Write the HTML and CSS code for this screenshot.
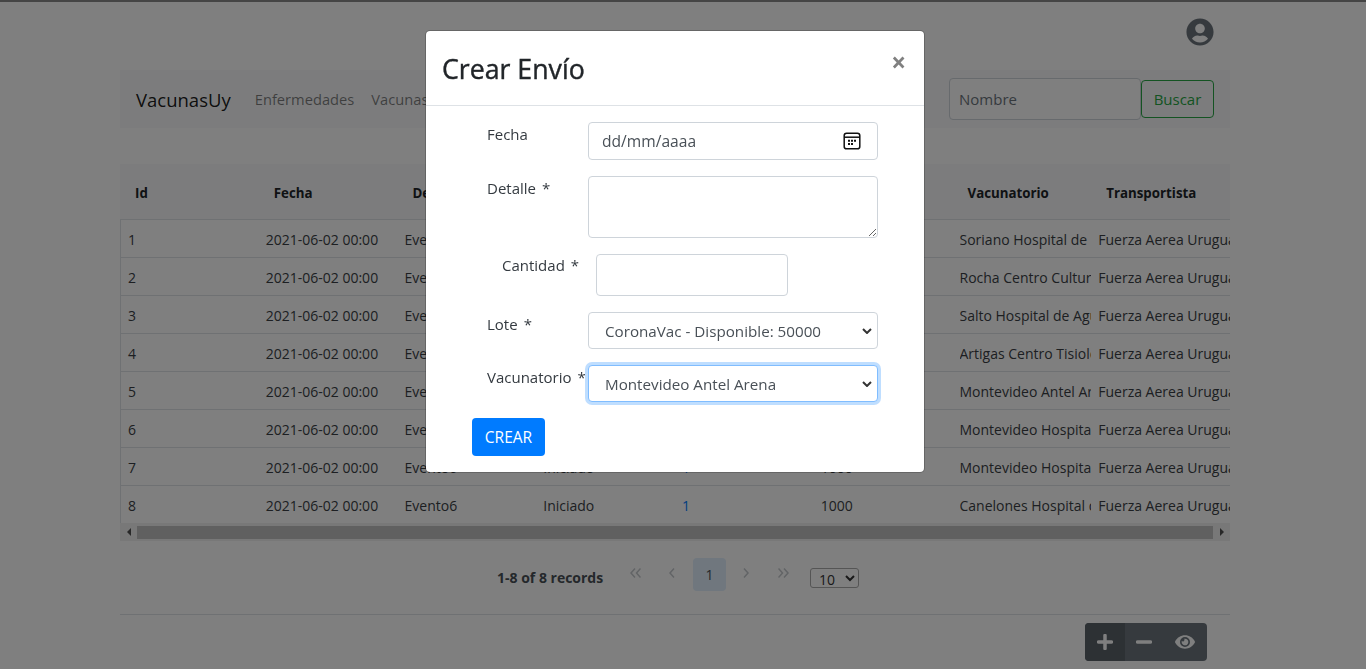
FILE: index.html
```html
<!DOCTYPE html>
<html lang="es">
<head>
    <meta charset="UTF-8">
    <meta name="viewport" content="width=device-width, initial-scale=1.0">
    <title>VacunasUy</title>
    <link rel="stylesheet" href="styles.css">
</head>
<body>
    <div class="top-line"></div>
    <div class="page">
        <div class="account">
            <svg class="account-icon" viewBox="0 0 496 512"><path d="M248 8C111 8 0 119 0 256s111 248 248 248 248-111 248-248S385 8 248 8zm0 96c48.6 0 88 39.4 88 88s-39.4 88-88 88-88-39.4-88-88 39.4-88 88-88zm0 344c-58.7 0-111.3-26.6-146.5-68.2 18.8-35.4 55.6-59.8 98.5-59.8 2.4 0 4.8.4 7.1 1.1 13 4.2 26.6 6.9 40.9 6.9 14.3 0 28-2.7 40.9-6.9 2.3-.7 4.7-1.1 7.1-1.1 42.9 0 79.7 24.4 98.5 59.8C359.3 421.4 306.7 448 248 448z"/></svg>
        </div>

        <nav class="navbar">
            <a class="brand" href="#">VacunasUy</a>
            <a class="nav-link" href="#">Enfermedades</a>
            <a class="nav-link" href="#">Vacunas</a>
            <form class="nav-search">
                <input class="nav-input" type="text" placeholder="Nombre">
                <button class="nav-button" type="button">Buscar</button>
            </form>
        </nav>

        <div class="table-box">
            <table class="data-table">
                <thead>
                    <tr><th>Id</th><th>Fecha</th><th>Detalle</th><th>Estado</th><th>Lote</th><th>Cantidad</th><th>Vacunatorio</th><th>Transportista</th></tr>
                </thead>
                <tbody>
                    <tr><td>1</td><td>2021-06-02 00:00</td><td>Evento1</td><td>Iniciado</td><td class="link">1</td><td>1000</td><td><div class="clip">Soriano Hospital de Dolores</div></td><td>Fuerza Aerea Uruguaya</td></tr>
                    <tr><td>2</td><td>2021-06-02 00:00</td><td>Evento2</td><td>Iniciado</td><td class="link">1</td><td>1000</td><td><div class="clip">Rocha Centro Cultural</div></td><td>Fuerza Aerea Uruguaya</td></tr>
                    <tr><td>3</td><td>2021-06-02 00:00</td><td>Evento3</td><td>Iniciado</td><td class="link">1</td><td>1000</td><td><div class="clip">Salto Hospital de Agudos</div></td><td>Fuerza Aerea Uruguaya</td></tr>
                    <tr><td>4</td><td>2021-06-02 00:00</td><td>Evento4</td><td>Iniciado</td><td class="link">1</td><td>1000</td><td><div class="clip">Artigas Centro Tisiol&oacute;gico</div></td><td>Fuerza Aerea Uruguaya</td></tr>
                    <tr><td>5</td><td>2021-06-02 00:00</td><td>Evento5</td><td>Iniciado</td><td class="link">1</td><td>1000</td><td><div class="clip">Montevideo Antel Arena</div></td><td>Fuerza Aerea Uruguaya</td></tr>
                    <tr><td>6</td><td>2021-06-02 00:00</td><td>Evento6</td><td>Iniciado</td><td class="link">1</td><td>1000</td><td><div class="clip">Montevideo Hospital de Clinicas</div></td><td>Fuerza Aerea Uruguaya</td></tr>
                    <tr><td>7</td><td>2021-06-02 00:00</td><td>Evento6</td><td>Iniciado</td><td class="link">1</td><td>1000</td><td><div class="clip">Montevideo Hospital Maciel</div></td><td>Fuerza Aerea Uruguaya</td></tr>
                    <tr><td>8</td><td>2021-06-02 00:00</td><td>Evento6</td><td>Iniciado</td><td class="link">1</td><td>1000</td><td><div class="clip">Canelones Hospital de Pando</div></td><td>Fuerza Aerea Uruguaya</td></tr>
                </tbody>
            </table>
            <div class="scrollbar">
                <span class="scroll-arrow scroll-left"></span>
                <span class="scroll-thumb"></span>
                <span class="scroll-arrow scroll-right"></span>
            </div>
        </div>

        <div class="pager">
            <span class="pager-total">1-8 of 8 records</span>
            <a class="pager-link" href="#"><svg class="pager-double" viewBox="0 0 11 10"><path d="M5 .5L1 5l4 4.5M10.5 .5L6.5 5l4 4.5"/></svg></a>
            <a class="pager-link" href="#"><svg class="pager-single" viewBox="0 0 6 10"><path d="M5 .5L1 5l4 4.5"/></svg></a>
            <a class="pager-current" href="#">1</a>
            <a class="pager-link" href="#"><svg class="pager-single" viewBox="0 0 6 10"><path d="M1 .5L5 5 1 9.5"/></svg></a>
            <a class="pager-link" href="#"><svg class="pager-double" viewBox="0 0 11 10"><path d="M.5 .5L4.5 5l-4 4.5M6 .5L10 5l-4 4.5"/></svg></a>
            <select class="pager-size"><option>10</option></select>
        </div>

        <hr class="divider">

        <div class="actions">
            <div class="action-group">
                <button class="action-button action-active" type="button">
                    <svg viewBox="0 0 16 16"><path d="M8 1.5v13M1.5 8h13"/></svg>
                </button>
                <button class="action-button action-minus" type="button">
                    <svg viewBox="0 0 16 16"><path d="M1.5 8h13"/></svg>
                </button>
                <button class="action-button action-eye" type="button">
                    <svg class="eye" viewBox="0 0 576 512"><path d="M572.52 241.4C518.29 135.59 410.93 64 288 64S57.68 135.64 3.48 241.41a32.35 32.35 0 0 0 0 29.19C57.71 376.41 165.07 448 288 448s230.32-71.64 284.52-177.41a32.35 32.35 0 0 0 0-29.19zM288 400a144 144 0 1 1 144-144 143.93 143.93 0 0 1-144 144zm0-240a95.31 95.31 0 0 0-25.31 3.79 47.85 47.85 0 0 1-66.9 66.9A95.78 95.78 0 1 0 288 160z"/></svg>
                </button>
            </div>
        </div>
    </div>

    <!-- Modal abierto sobre la lista -->
    <div class="backdrop"></div>
    <div class="modal">
        <div class="modal-header">
            <h2 class="modal-title">Crear Env&iacute;o</h2>
            <span class="modal-close">&times;</span>
        </div>
        <form class="modal-form">
            <div class="form-row">
                <label class="form-label">Fecha</label>
                <div class="date-field">
                    <input class="form-control form-date" type="text" placeholder="dd/mm/aaaa">
                    <svg class="date-icon" viewBox="0 0 18 18">
                        <rect x="1.2" y="1.2" width="15.6" height="15.6" rx="2.4"/>
                        <path d="M1.2 5.2h15.6"/>
                        <path class="date-dots" d="M5 7.8h2v2H5zM8 7.8h2v2H8zM11 7.8h2v2h-2zM5 11h2v2H5zM8 11h2v2H8z"/>
                    </svg>
                </div>
            </div>
            <div class="form-row">
                <label class="form-label">Detalle<span class="required">*</span></label>
                <textarea class="form-control form-area"></textarea>
            </div>
            <div class="form-row form-row-short">
                <label class="form-label">Cantidad<span class="required">*</span></label>
                <input class="form-control form-number" type="text">
            </div>
            <div class="form-row">
                <label class="form-label">Lote<span class="required">*</span></label>
                <select class="form-control form-select"><option>CoronaVac - Disponible: 50000</option></select>
            </div>
            <div class="form-row">
                <label class="form-label">Vacunatorio<span class="required">*</span></label>
                <select class="form-control form-select form-focus"><option>Montevideo Antel Arena</option></select>
            </div>
            <button class="submit-button" type="button">CREAR</button>
        </form>
    </div>
</body>
</html>
```

FILE: styles.css
```css
* {
    box-sizing: border-box;
}

html, body {
    height: 100%;
    overflow: hidden;
}

body {
    margin: 0;
    background-color: #fff;
    color: #212529;
    font-family: "Open Sans", "Noto Sans", sans-serif;
    font-size: 15px;
}

a {
    text-decoration: none;
}

.top-line {
    height: 2px;
    background-color: #8a8a8a;
}

.page {
    width: 1110px;
    margin-left: 120px;
}

.account {
    display: flex;
    justify-content: flex-end;
    height: 68px;
    padding: 16px 16px 0 0;
}

.account-icon {
    width: 28px;
    height: 28px;
    fill: #6c757d;
}

/* Barra de navegacion */
.navbar {
    display: flex;
    align-items: center;
    height: 58px;
    padding: 0 16px;
    background-color: #f8f9fa;
}

.brand {
    margin-right: 24px;
    color: rgba(0, 0, 0, 0.9);
    font-size: 18.5px;
}

.nav-link {
    margin-right: 17px;
    color: rgba(0, 0, 0, 0.5);
    font-size: 14.7px;
}

.nav-search {
    display: flex;
    align-items: center;
    margin-left: auto;
}

.nav-input {
    width: 192px;
    height: 42px;
    padding: 0 9px;
    border: 1px solid #ced4da;
    border-radius: 4px;
    background-color: #fff;
    font: inherit;
}

.nav-input::placeholder {
    color: #6c757d;
}

.nav-button {
    width: 73px;
    height: 38px;
    padding: 0;
    border: 1px solid #28a745;
    border-radius: 4px;
    background: transparent;
    color: #28a745;
    font: inherit;
}

/* Tabla */
.table-box {
    margin-top: 36px;
}

.data-table {
    width: 100%;
    table-layout: fixed;
    border-collapse: separate;
    border-spacing: 0;
    font-size: 14px;
}

.data-table th {
    height: 55px;
    padding: 2px 15px 0;
    background-color: #f8f9fa;
    font-size: 13.3px;
    text-align: left;
    white-space: nowrap;
}

.data-table td {
    height: 38px;
    padding: 2px 0 0 7px;
    border-top: 1px solid #dee2e6;
    color: #3a3f45;
    white-space: nowrap;
    overflow: hidden;
}

.data-table td:first-child {
    border-left: 1px solid #dee2e6;
}

.data-table td.link {
    color: #007bff;
}

.clip {
    width: 132px;
    overflow: hidden;
}

.scrollbar {
    display: flex;
    align-items: center;
    height: 18px;
    background-color: #f1f1f1;
}

.scroll-arrow {
    width: 17px;
    flex: none;
    display: flex;
    justify-content: center;
}

.scroll-left::before, .scroll-right::before {
    content: '';
    border-top: 4px solid transparent;
    border-bottom: 4px solid transparent;
}

.scroll-left::before {
    border-right: 4px solid #505050;
}

.scroll-right::before {
    border-left: 4px solid #505050;
}

.scroll-thumb {
    flex: 1;
    height: 13px;
    background-color: #c1c1c1;
}

/* Paginacion */
.pager {
    display: flex;
    align-items: center;
    height: 73px;
    padding-left: 377px;
    font-size: 14px;
}

.pager-total {
    width: 121px;
    color: #495057;
    font-weight: 700;
}

.pager-link {
    display: flex;
    justify-content: center;
    width: 34px;
    margin-right: 3px;
    padding-bottom: 9px;
}

.pager-link svg {
    height: 10px;
    fill: none;
    stroke: #c4c8cc;
    stroke-width: 1.5;
}

.pager-double {
    width: 11px;
}

.pager-single {
    width: 6px;
}

.pager-current {
    width: 33px;
    height: 33px;
    margin: 0 3px 7px 1px;
    border-radius: 4px;
    background-color: #e0eefc;
    color: #495057;
    font-size: 14px;
    line-height: 33px;
    text-align: center;
}

.pager-size {
    width: 49px;
    height: 20px;
    margin-left: 7px;
    padding: 0 4px;
    border: 1px solid #aaa;
    border-radius: 3px;
    background-color: #fff;
    color: #333;
    font: inherit;
    font-size: 14px;
}

.divider {
    margin: 0;
    border: 0;
    border-top: 1px solid #dee2e6;
}

.actions {
    display: flex;
    justify-content: flex-end;
    padding: 8px 23px 0 0;
}

.action-group {
    display: flex;
    overflow: hidden;
    border-radius: 4px;
    background-color: #6c757d;
}

.action-button {
    display: flex;
    align-items: center;
    justify-content: center;
    width: 40px;
    height: 38px;
    padding: 0;
    border: 0;
    background: transparent;
}

.action-minus {
    width: 38px;
}

.action-eye {
    width: 44px;
}

.action-button svg {
    width: 16px;
    height: 16px;
    fill: none;
    stroke: #fff;
    stroke-width: 3.5;
    stroke-linecap: round;
}

.action-button svg.eye {
    width: 20px;
    height: 18px;
    fill: #fff;
    stroke: none;
}

.action-active {
    background-color: #5a6268;
}

/* Modal */
.backdrop {
    position: fixed;
    top: 0;
    left: 0;
    right: 0;
    bottom: 0;
    background-color: rgba(0, 0, 0, 0.5);
}

.modal {
    position: fixed;
    top: 30px;
    left: 425px;
    width: 500px;
    height: 443px;
    border: 1px solid rgba(0, 0, 0, 0.2);
    border-radius: 5px;
    background-clip: padding-box;
    background-color: #fff;
}

.modal-header {
    display: flex;
    justify-content: space-between;
    height: 75px;
    padding: 16px;
    border-bottom: 1px solid #dee2e6;
}

.modal-title {
    margin: 0;
    font-size: 26.7px;
    font-weight: 400;
    line-height: 44px;
    -webkit-text-stroke: 0.4px #212529;
}

.modal-close {
    margin-right: 2px;
    color: #808080;
    font-size: 26px;
    font-weight: 700;
    line-height: 30px;
}

.modal-form {
    padding: 16px 46px;
}

.form-row {
    display: flex;
    align-items: flex-start;
    margin-bottom: 16px;
    padding-left: 15px;
    font-size: 15px;
}

.form-label {
    flex: none;
    width: 101px;
    padding-top: 1px;
    color: #343a40;
    line-height: 22px;
    white-space: nowrap;
}

.required {
    margin-left: 6px;
}

.form-control {
    display: block;
    width: 290px;
    height: 38px;
    padding: 0 13px;
    border: 1px solid #ced4da;
    border-radius: 4px;
    background-color: #fff;
    color: #495057;
    font: inherit;
    font-size: 15.2px;
}

.form-control::placeholder {
    color: #495057;
}

.form-date {
    font-size: 15.6px;
}

.date-field {
    position: relative;
}

.date-icon {
    position: absolute;
    top: 10px;
    right: 17px;
    width: 18px;
    height: 18px;
    fill: none;
    stroke: #111;
    stroke-width: 1.5;
}

.date-dots {
    fill: #111;
    stroke: none;
}

.form-area {
    height: 62px;
    resize: vertical;
}

.form-row-short {
    padding-left: 30px;
}

.form-row-short .form-label {
    width: 94px;
    padding-top: 0;
}

.form-number {
    width: 192px;
    height: 42px;
}

.form-select {
    height: 37px;
    padding-left: 16px;
    appearance: none;
    background-image: url("data:image/svg+xml,%3Csvg xmlns='http://www.w3.org/2000/svg' width='10' height='6'%3E%3Cpath d='M1 1l4 4 4-4' fill='none' stroke='%23333' stroke-width='2'/%3E%3C/svg%3E");
    background-position: right 5px center;
    background-repeat: no-repeat;
}

.form-focus {
    border-color: #80bdff;
    box-shadow: 0 0 0 3px rgba(0, 123, 255, 0.25);
}

.submit-button {
    width: 73px;
    height: 38px;
    padding: 0;
    border: 0;
    border-radius: 4px;
    background-color: #007bff;
    color: #fff;
    font: inherit;
    font-size: 15.5px;
}
```
